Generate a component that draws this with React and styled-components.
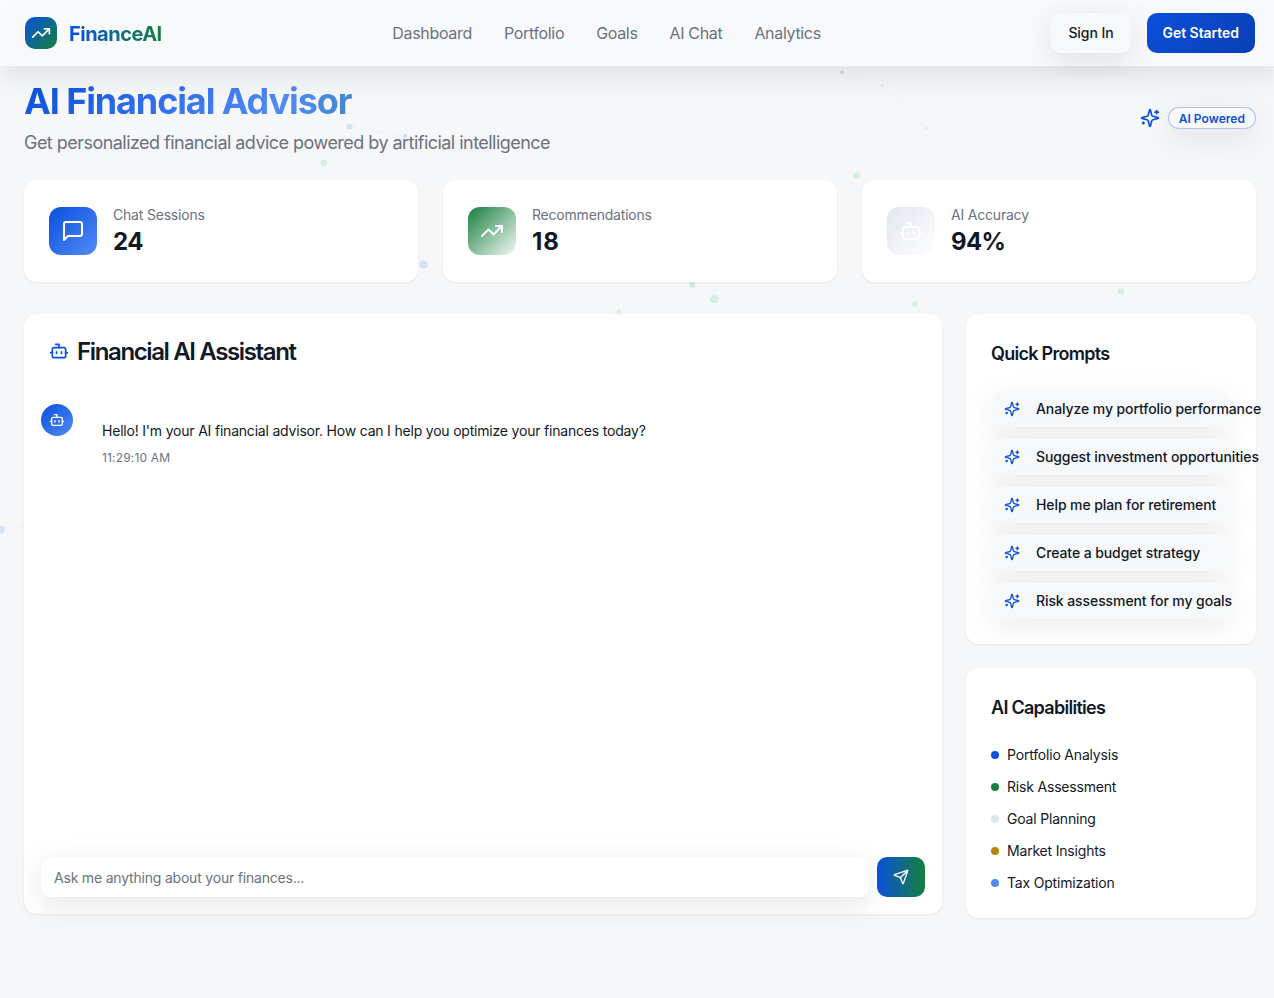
import React from "react";
import styled, { createGlobalStyle, css } from "styled-components";
import { Bot, Send, TrendingUp } from "lucide-react";

const c = {
  page: "#f5f7f9",
  ink: "#111827",
  muted: "#6b7280",
  primary: "#0a50dc",
  primaryDark: "#083fb3",
  glow: "#528af8",
  green: "#16803c",
  mist: "#e1e5ef",
  gold: "#b8860b",
};

const GlobalStyle = createGlobalStyle`
  *, *::before, *::after { box-sizing: border-box; }
  html, body { margin: 0; overflow: hidden; }
  body {
    background: ${c.page};
    color: ${c.ink};
    font-family: Inter, "Liberation Sans", sans-serif;
    font-size: 16px;
    line-height: 24px;
    -webkit-font-smoothing: antialiased;
  }
  h1, h2, h3, p, ul { margin: 0; padding: 0; }
  ul { list-style: none; }
  button, input { font-family: inherit; margin: 0; }
  svg { flex-shrink: 0; display: block; }
`;

const glass = css`
  border: 1px solid rgba(255, 255, 255, 0.3);
  box-shadow: 0 8px 32px rgba(0, 0, 0, 0.1);
`;

const Page = styled.div`
  position: relative;
  isolation: isolate;
  width: 1280px;
  min-height: 998px;
`;

const Particles = styled.svg`
  position: absolute;
  inset: 0;
  z-index: -1;
`;

const Header = styled.header`
  ${glass};
  position: relative;
  height: 66px;
  padding: 0 24px;
  display: flex;
  align-items: center;
  justify-content: space-between;
  background: #f7f9fb;
`;

const Brand = styled.div`
  display: flex;
  align-items: center;
  gap: 12px;
`;

const BrandMark = styled.span`
  width: 32px;
  height: 32px;
  border-radius: 10px;
  display: grid;
  place-items: center;
  color: #fff;
  background: linear-gradient(135deg, ${c.primary}, ${c.green});
`;

const BrandName = styled.span`
  padding-top: 2px;
  font-size: 20px;
  line-height: 28px;
  font-weight: 700;
  letter-spacing: -0.5px;
  color: transparent;
  background: linear-gradient(90deg, ${c.primary}, ${c.green});
  background-clip: text;
`;

const Nav = styled.nav`
  display: flex;
  gap: 32px;
  letter-spacing: -0.33px;
  color: ${c.muted};
`;

const Actions = styled.div`
  display: flex;
  gap: 16px;
`;

const HeaderButton = styled.button`
  height: 40px;
  padding: 0 16px;
  border-radius: 10px;
  font-size: 14px;
  line-height: 20px;
  letter-spacing: -0.06px;
  font-weight: ${(p) => (p.$solid ? 600 : 500)};
  ${(p) =>
    p.$solid
      ? css`
          border: 0;
          color: #fff;
          background: linear-gradient(135deg, ${c.primary}, ${c.primaryDark});
        `
      : css`
          ${glass};
          color: ${c.ink};
          background: #f7f8fa;
        `}
`;

const Main = styled.main`
  padding: 14px 24px 24px;
`;

const Intro = styled.section`
  display: flex;
  align-items: center;
  justify-content: space-between;
  margin-bottom: 24px;
`;

const Title = styled.h1`
  padding-top: 1px;
  font-size: 36px;
  line-height: 40px;
  font-weight: 700;
  letter-spacing: -1.12px;
  color: transparent;
  background: linear-gradient(135deg, ${c.primary} 0%, ${c.glow} 50%, ${c.green} 100%);
  background-clip: text;
`;

const Subtitle = styled.p`
  margin: 8px 0 -1px;
  font-size: 18px;
  line-height: 28px;
  letter-spacing: -0.535px;
  color: ${c.muted};
`;

const Powered = styled.div`
  display: flex;
  align-items: center;
  gap: 8px;
  color: ${c.primary};
`;

const Badge = styled.span`
  ${glass};
  border-color: rgba(10, 80, 220, 0.3);
  border-radius: 999px;
  padding: 3px 10px 1px;
  font-size: 12px;
  line-height: 16px;
  font-weight: 600;
  letter-spacing: 0.04px;
  background: #f7f9fb;
`;

const Card = styled.section`
  border: 1px solid #fff;
  border-radius: 12px;
  background: #fff;
  box-shadow: 0 1px 3px rgba(0, 0, 0, 0.05), 0 1px 2px rgba(0, 0, 0, 0.02);
`;

const Stats = styled.div`
  display: grid;
  grid-template-columns: repeat(3, 394px);
  justify-content: space-between;
  margin-bottom: 32px;
`;

const StatCard = styled(Card)`
  display: flex;
  align-items: center;
  gap: 16px;
  padding: 24px;
`;

const StatIcon = styled.span`
  width: 48px;
  height: 48px;
  border-radius: 12px;
  display: grid;
  place-items: center;
  color: #fff;
  background: linear-gradient(135deg, ${(p) => p.$from}, ${(p) => p.$to});
`;

const StatLabel = styled.p`
  font-size: 14px;
  line-height: 20px;
  letter-spacing: -0.2px;
  color: ${c.muted};
`;

const StatValue = styled.p`
  padding-top: 1px;
  margin-bottom: -1px;
  font-size: 24px;
  line-height: 32px;
  font-weight: 700;
  letter-spacing: ${(p) => p.$tracking}px;
`;

const Columns = styled.div`
  display: grid;
  grid-template-columns: 918px 290px;
  gap: 24px;
  align-items: start;
`;

const Chat = styled(Card)`
  height: 600px;
  display: flex;
  flex-direction: column;
`;

const ChatTitle = styled.h2`
  display: flex;
  align-items: flex-start;
  gap: 8px;
  padding: 24px;
  font-size: 24px;
  line-height: 25px;
  font-weight: 600;
  letter-spacing: -1.37px;

  svg {
    margin-top: 2px;
    color: ${c.primary};
  }
`;

const Messages = styled.div`
  flex: 1;
  padding: 16px;
`;

const Message = styled.div`
  display: flex;
  align-items: flex-start;
  gap: 12px;
`;

const Avatar = styled.span`
  width: 32px;
  height: 32px;
  border-radius: 50%;
  display: grid;
  place-items: center;
  color: #fff;
  background: linear-gradient(135deg, ${c.primary}, ${c.glow});
`;

const Bubble = styled.div`
  padding: 17px;
  font-size: 14px;
  line-height: 20px;
  letter-spacing: -0.2px;
`;

const Time = styled.p`
  margin-top: 9px;
  font-size: 12px;
  line-height: 16px;
  letter-spacing: 0.17px;
  color: ${c.muted};
`;

const Composer = styled.form`
  display: flex;
  gap: 8px;
  padding: 16px;
`;

const Prompt = styled.input`
  ${glass};
  border-color: #fff;
  flex: 1;
  height: 40px;
  padding: 0 12px;
  border-radius: 10px;
  font-size: 14px;
  letter-spacing: -0.2px;
  background: #fff;
  outline: 0;

  &::placeholder {
    color: ${c.muted};
    opacity: 1;
  }
`;

const SendButton = styled.button`
  width: 48px;
  height: 40px;
  border: 0;
  padding: 0;
  border-radius: 10px;
  display: grid;
  place-items: center;
  color: #fff;
  background: linear-gradient(90deg, ${c.primary}, ${c.green});
`;

const Side = styled.aside`
  display: grid;
  grid-template-columns: 100%;
  gap: 24px;
`;

const SideCard = styled(Card)`
  padding: 24px;
`;

const SideTitle = styled.h3`
  padding-top: 1px;
  margin-bottom: 23px;
  font-size: 18px;
  line-height: 28px;
  font-weight: 600;
  letter-spacing: -0.72px;
`;

const List = styled.ul`
  display: grid;
  grid-template-columns: 100%;
  gap: 12px;
`;

const QuickPrompt = styled.button`
  ${glass};
  width: 100%;
  height: 36px;
  padding: 0 12px;
  border-radius: 10px;
  display: flex;
  align-items: center;
  gap: 16px;
  white-space: nowrap;
  font-size: 14px;
  line-height: 20px;
  font-weight: 500;
  letter-spacing: -0.09px;
  color: ${c.ink};
  background: rgba(245, 247, 250, 0.9);
  box-shadow: 0 8px 32px rgba(0, 0, 0, 0.08);

  svg {
    color: ${c.primary};
  }
`;

const Capability = styled.li`
  display: flex;
  align-items: center;
  gap: 8px;
  font-size: 14px;
  line-height: 20px;
  letter-spacing: -0.19px;
`;

const Dot = styled.span`
  width: 8px;
  height: 8px;
  border-radius: 50%;
  background: ${(p) => p.$color};
`;

const Stroke = ({ size, children }) => (
  <svg
    width={size}
    height={size}
    viewBox="0 0 24 24"
    fill="none"
    stroke="currentColor"
    strokeWidth="2"
    strokeLinecap="round"
    strokeLinejoin="round"
    aria-hidden="true"
  >
    {children}
  </svg>
);

const Sparkles = ({ size }) => (
  <Stroke size={size}>
    <path d="M9.937 15.5A2 2 0 0 0 8.5 14.063l-6.135-1.582a.5.5 0 0 1 0-.962L8.5 9.936A2 2 0 0 0 9.937 8.5l1.582-6.135a.5.5 0 0 1 .963 0L14.063 8.5A2 2 0 0 0 15.5 9.937l6.135 1.581a.5.5 0 0 1 0 .964L15.5 14.063a2 2 0 0 0-1.437 1.437l-1.582 6.135a.5.5 0 0 1-.963 0z" />
    <path d="M20 3v4" />
    <path d="M22 5h-4" />
    <path d="M4 17v2" />
    <path d="M5 18H3" />
  </Stroke>
);

const MessageSquare = ({ size }) => (
  <Stroke size={size}>
    <path d="M21 15a2 2 0 0 1-2 2H7l-4 4V5a2 2 0 0 1 2-2h14a2 2 0 0 1 2 2z" />
  </Stroke>
);

const blue = "#d9e3f5";
const mint = "#d6efe1";

const points = [
  [349.5, 126.5, 3, blue], [405.2, 136, 2, "#cddcf6"], [323.6, 163, 3.2, mint],
  [842, 72.3, 1.8, "#c8d3f0"], [882, 85.5, 1.2, "#dbe6f6"], [925.8, 128, 2, "#e0f3ec"],
  [856.7, 175.6, 3.4, mint], [423.7, 264.4, 4.1, blue], [692.3, 285, 3, "#cdecda"],
  [714.3, 299.2, 4, mint], [618.6, 312, 2.4, mint], [914.4, 304, 3.1, "#dbf2e6"],
  [1121, 291.2, 3.2, mint], [0.5, 529.5, 4, blue],
];

const links = [
  [349.5, 126.5, 405, 136, 0.7], [349.5, 126.5, 323.6, 163, 0.4], [842, 72, 882, 85.5, 0.7],
  [882, 85.5, 926, 128, 0.6], [926, 128, 856.7, 175.6, 0.15], [692, 285, 714, 299, 0.8],
  [692, 285, 618.6, 312, 0.4], [714, 299, 720, 270, 0.4], [1121, 291, 1128, 278, 0.4],
  [0, 529.5, 40, 524, 0.7],
];

const stats = [
  { label: "Chat Sessions", value: "24", tracking: -0.6, Icon: MessageSquare, from: c.primary, to: c.glow },
  { label: "Recommendations", value: "18", tracking: 1, Icon: TrendingUp, from: c.green, to: "#f5f8f7" },
  { label: "AI Accuracy", value: "94%", tracking: -0.7, Icon: Bot, from: c.mist, to: "#ffffff" },
];

const prompts = [
  "Analyze my portfolio performance",
  "Suggest investment opportunities",
  "Help me plan for retirement",
  "Create a budget strategy",
  "Risk assessment for my goals",
];

const capabilities = [
  ["Portfolio Analysis", c.primary],
  ["Risk Assessment", c.green],
  ["Goal Planning", c.mist],
  ["Market Insights", c.gold],
  ["Tax Optimization", c.glow],
];

export default function App() {
  return (
    <Page>
      <GlobalStyle />
      <Particles width="1280" height="998" aria-hidden="true">
        {links.map(([x1, y1, x2, y2, o], i) => (
          <line key={i} x1={x1} y1={y1} x2={x2} y2={y2} stroke="#edf1f6" strokeOpacity={o} />
        ))}
        {points.map(([x, y, r, fill], i) => (
          <circle key={i} cx={x} cy={y} r={r} fill={fill} />
        ))}
      </Particles>

      <Header>
        <Brand>
          <BrandMark><TrendingUp size={20} /></BrandMark>
          <BrandName>FinanceAI</BrandName>
        </Brand>
        <Nav>
          {["Dashboard", "Portfolio", "Goals", "AI Chat", "Analytics"].map((item) => (
            <span key={item}>{item}</span>
          ))}
        </Nav>
        <Actions>
          <HeaderButton>Sign In</HeaderButton>
          <HeaderButton $solid>Get Started</HeaderButton>
        </Actions>
      </Header>

      <Main>
        <Intro>
          <div>
            <Title>AI Financial Advisor</Title>
            <Subtitle>Get personalized financial advice powered by artificial intelligence</Subtitle>
          </div>
          <Powered>
            <Sparkles size={20} />
            <Badge>AI Powered</Badge>
          </Powered>
        </Intro>

        <Stats>
          {stats.map(({ label, value, tracking, Icon, from, to }) => (
            <StatCard key={label}>
              <StatIcon $from={from} $to={to}><Icon size={24} /></StatIcon>
              <div>
                <StatLabel>{label}</StatLabel>
                <StatValue $tracking={tracking}>{value}</StatValue>
              </div>
            </StatCard>
          ))}
        </Stats>

        <Columns>
          <Chat>
            <ChatTitle><Bot size={20} />Financial AI Assistant</ChatTitle>
            <Messages>
              <Message>
                <Avatar><Bot size={16} /></Avatar>
                <Bubble>
                  <p>Hello! I'm your AI financial advisor. How can I help you optimize your finances today?</p>
                  <Time>11:29:10 AM</Time>
                </Bubble>
              </Message>
            </Messages>
            <Composer>
              <Prompt placeholder="Ask me anything about your finances..." />
              <SendButton type="button" aria-label="Send"><Send size={16} /></SendButton>
            </Composer>
          </Chat>

          <Side>
            <SideCard>
              <SideTitle>Quick Prompts</SideTitle>
              <List>
                {prompts.map((text) => (
                  <li key={text}>
                    <QuickPrompt><Sparkles size={16} />{text}</QuickPrompt>
                  </li>
                ))}
              </List>
            </SideCard>
            <SideCard>
              <SideTitle>AI Capabilities</SideTitle>
              <List>
                {capabilities.map(([name, color]) => (
                  <Capability key={name}><Dot $color={color} />{name}</Capability>
                ))}
              </List>
            </SideCard>
          </Side>
        </Columns>
      </Main>
    </Page>
  );
}
